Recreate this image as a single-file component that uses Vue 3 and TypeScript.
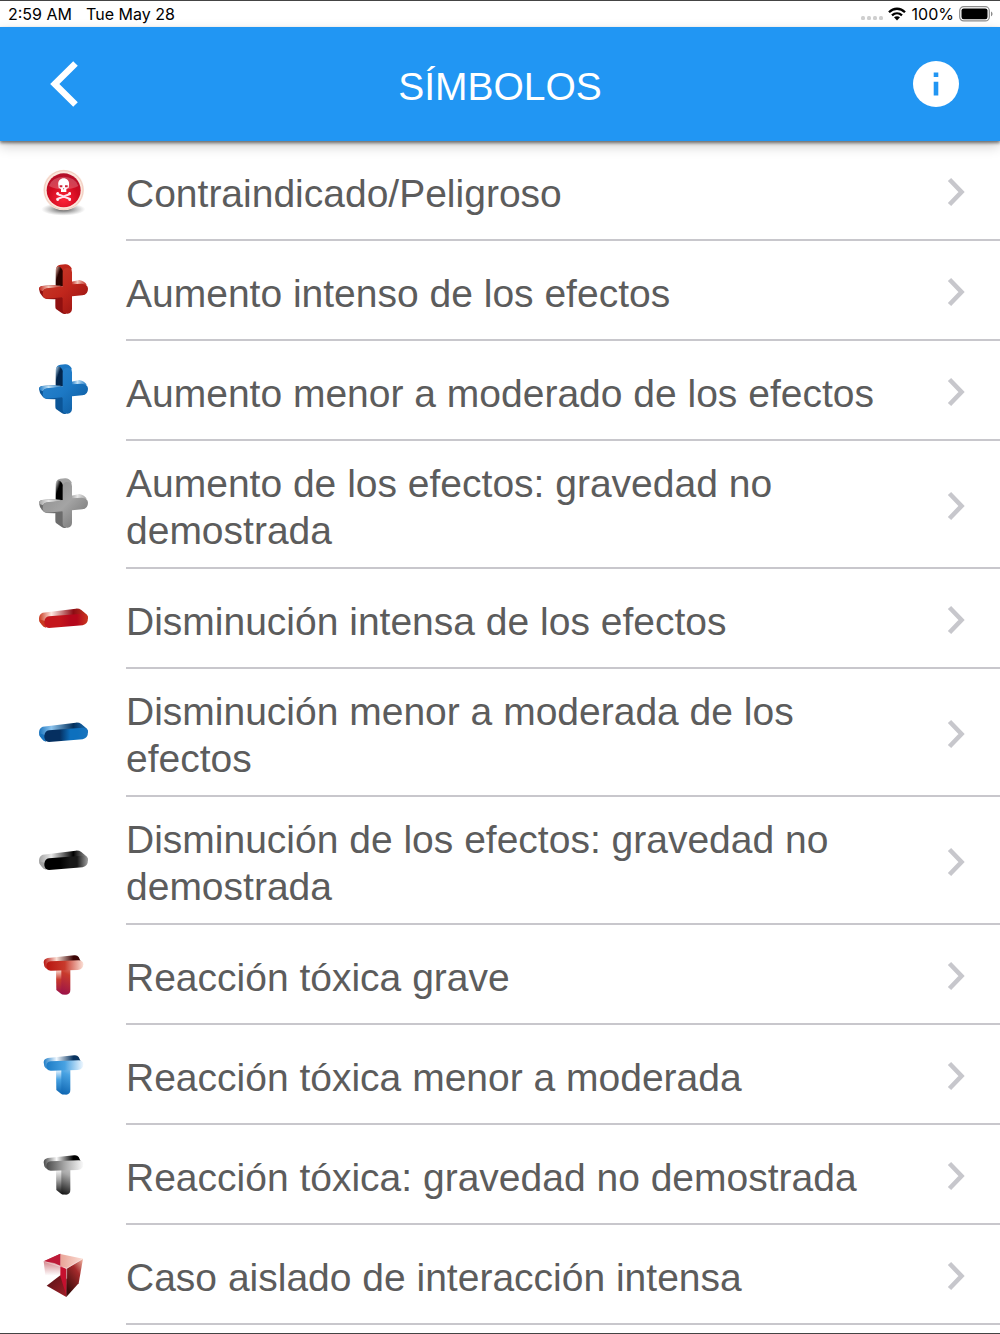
<script setup lang="ts">
type Shape = 'skull' | 'plus' | 'minus' | 'tee' | 'cube'

interface Tone {
  light: string
  main: string
  deep: string
  dark: string
  tip: string
}

interface SymbolRow {
  label: string
  shape: Shape
  tone: Tone
}

const red: Tone = { light: '#f3c5b8', main: '#c0261c', deep: '#8f1010', dark: '#2c0300', tip: '#c8402c' }
const blue: Tone = { light: '#c3e2f6', main: '#1c78c4', deep: '#0b5597', dark: '#03264d', tip: '#2c86d0' }
const grey: Tone = { light: '#e6e6e6', main: '#a4a4a4', deep: '#6c6c6c', dark: '#000000', tip: '#8a8a8a' }
const crimson: Tone = { light: '#ffe9e2', main: '#c4161c', deep: '#b4081c', dark: '#8c0c14', tip: '#c9391f' }
const navy: Tone = { light: '#8cc4ee', main: '#052f60', deep: '#0d70be', dark: '#04305c', tip: '#1a74be' }
const black: Tone = { light: '#e8e8e8', main: '#000000', deep: '#181818', dark: '#000000', tip: '#a2a2a2' }
const teeRed: Tone = { light: '#fbe0d6', main: '#c83a2c', deep: '#98104a', dark: '#3c0505', tip: '#b8150f' }
const teeBlue: Tone = { light: '#f0f8ff', main: '#48a2e2', deep: '#0b62ae', dark: '#08335f', tip: '#1d7cc6' }
const teeGrey: Tone = { light: '#fafafa', main: '#a8a8a8', deep: '#0c0c0c', dark: '#000000', tip: '#4a4a4a' }

const rows: SymbolRow[] = [
  { label: 'Contraindicado/Peligroso', shape: 'skull', tone: red },
  { label: 'Aumento intenso de los efectos', shape: 'plus', tone: red },
  { label: 'Aumento menor a moderado de los efectos', shape: 'plus', tone: blue },
  { label: 'Aumento de los efectos: gravedad no demostrada', shape: 'plus', tone: grey },
  { label: 'Disminución intensa de los efectos', shape: 'minus', tone: crimson },
  { label: 'Disminución menor a moderada de los efectos', shape: 'minus', tone: navy },
  { label: 'Disminución de los efectos: gravedad no demostrada', shape: 'minus', tone: black },
  { label: 'Reacción tóxica grave', shape: 'tee', tone: teeRed },
  { label: 'Reacción tóxica menor a moderada', shape: 'tee', tone: teeBlue },
  { label: 'Reacción tóxica: gravedad no demostrada', shape: 'tee', tone: teeGrey },
  { label: 'Caso aislado de interacción intensa', shape: 'cube', tone: red },
]
</script>

<template>
  <div class="app">
    <div class="status">
      <div class="status-group">
        <span>2:59 AM</span>
        <span>Tue May 28</span>
      </div>
      <div class="status-group right">
        <svg class="dots" viewBox="0 0 22 5" aria-hidden="true">
          <g fill="#cfcfcf">
            <rect x="0" y="0" width="4" height="4" rx="1.5" />
            <rect x="6" y="0" width="4" height="4" rx="1.5" />
            <rect x="12" y="0" width="4" height="4" rx="1.5" />
            <rect x="18" y="0" width="4" height="4" rx="1.5" />
          </g>
        </svg>
        <svg class="wifi" viewBox="0 0 18 14" aria-hidden="true">
          <g fill="none" stroke="#000" stroke-width="2.3">
            <path d="M1 5.2C5.6 .6 12.4 .6 17 5.2" />
            <path d="M4 8.3c2.900-2.700 7.100-2.700 10 0" />
          </g>
          <path d="M9 13.400l-3-3.100c1.700-1.500 4.300-1.500 6 0z" />
        </svg>
        <span>100%</span>
        <svg class="battery" viewBox="0 0 34 16" aria-hidden="true">
          <rect x="0.700" y="0.700" width="29.600" height="14.200" rx="4" fill="none" stroke="#8c8c8c" stroke-width="1.200" />
          <rect x="2.500" y="2.400" width="26" height="10.800" rx="2.200" />
          <path d="M32 5.500c2 .8 2 4 0 4.800z" fill="#8c8c8c" />
        </svg>
      </div>
    </div>

    <header class="bar">
      <button class="bar-button" type="button" aria-label="Volver">
        <svg width="28" height="46" viewBox="0 0 28 46" aria-hidden="true">
          <path d="M25.500 2.500L4.800 23l20.700 20.500" fill="none" stroke="#fff" stroke-width="6.500" />
        </svg>
      </button>
      <h1>SÍMBOLOS</h1>
      <button class="bar-button end" type="button" aria-label="Información">
        <svg width="46" height="46" viewBox="0 0 46 46" aria-hidden="true">
          <circle cx="23" cy="23" r="23" fill="#fff" />
          <path d="M20.700 11.500h4.600v4.600h-4.600zM20.700 20.700h4.600v13.800h-4.600z" fill="#2196f3" />
        </svg>
      </button>
    </header>

    <ul class="list">
      <li v-for="(row, i) in rows" :key="row.label">
        <a href="#" class="row">
          <svg v-if="row.shape === 'skull'" class="icon" viewBox="24 16 150 150" aria-hidden="true">
            <defs>
              <radialGradient id="ball" cx=".5" cy=".75" r=".75">
                <stop offset="0" stop-color="#ff2438" />
                <stop offset=".6" stop-color="#cf0a20" />
                <stop offset="1" stop-color="#b0102a" />
              </radialGradient>
              <radialGradient id="ground">
                <stop offset="0" stop-color="#333" stop-opacity=".9" />
                <stop offset="1" stop-color="#777" stop-opacity="0" />
              </radialGradient>
            </defs>
            <ellipse cx="100" cy="146" rx="66" ry="19" fill="url(#ground)" />
            <circle cx="101" cy="88" r="61" fill="#fbe6dc" />
            <circle cx="101" cy="88" r="58" fill="none" stroke="#f1cdbf" stroke-width="3" />
            <circle cx="101" cy="89" r="51" fill="url(#ball)" />
            <path d="M57 76a45 35 0 0 1 88 0c-24 14-64 14-88 0z" fill="#fff" opacity=".22" />
            <path d="M85 73c-4-27 36-27 32 0l-1 8-7 4v9h-16v-9l-7-4z" fill="#fff" />
            <path d="M89 74h8v6h-8zM105 74h8v6h-8zM99 83l4 0-2 4z" fill="#cf2338" />
            <path d="M82 100l38 15M120 100l-38 15" stroke="#ffe3ef" stroke-width="6" stroke-linecap="round" />
            <g fill="#ffeef5">
              <circle cx="83" cy="98" r="4" /><circle cx="119" cy="98" r="4" />
              <circle cx="83" cy="117" r="4" /><circle cx="119" cy="117" r="4" />
            </g>
          </svg>

          <svg v-else-if="row.shape === 'plus'" class="icon" viewBox="24 31 150 150" aria-hidden="true">
            <defs>
              <linearGradient :id="`front${i}`" x1="0" y1="0" x2="1" y2="1">
                <stop offset="0" :stop-color="row.tone.tip" />
                <stop offset=".5" :stop-color="row.tone.main" />
                <stop offset="1" :stop-color="row.tone.deep" />
              </linearGradient>
              <linearGradient :id="`side${i}`" x1="0" y1="0" x2="1" y2="1">
                <stop offset="0" :stop-color="row.tone.light" />
                <stop offset=".4" :stop-color="row.tone.dark" />
                <stop offset="1" :stop-color="row.tone.dark" />
              </linearGradient>
              <linearGradient :id="`top${i}`" x1="0" y1="0" x2="1" y2="0">
                <stop offset="0" :stop-color="row.tone.main" />
                <stop offset=".4" :stop-color="row.tone.light" />
                <stop offset="1" :stop-color="row.tone.main" />
              </linearGradient>
            </defs>
            <path d="M27 100q0-7 9-9l42-3 22 5-3 35-24 3-23-1q-9-1-13-8-9-10-10-22z" :fill="row.tone.deep" />
            <path d="M27 102q0-9 9-11l42-3 20 6-49 5q-8 1-10 8z" :fill="`url(#top${i})`" />
            <path d="M76 129l22-6 10 51q-6 3-14-3l-16-11q-2-2-2-9z" :fill="row.tone.deep" />
            <path d="M78 40q2-12 13-13l14-1q12-1 20 12l-2 14H98z" :fill="row.tone.main" />
            <path d="M77 42q2-9 8-10 12 4 14 18v42l-22-3z" :fill="`url(#side${i})`" />
            <path d="M124 78l24-5q16 4 22 14l-22 4-24-2z" :fill="`url(#top${i})`" />
            <path d="M98 51q1-14 13-14 14 0 15 13v36l28-2q20 1 20 15 0 18-17 20l-31 3v38q-1 13-13 14-14 1-15-12v-37l-48 4q-11-2-12-12 0-18 13-19l47-5z" :fill="`url(#front${i})`" />
          </svg>

          <svg v-else-if="row.shape === 'minus'" class="icon" viewBox="24 12 150 150" aria-hidden="true">
            <defs>
              <linearGradient :id="`front${i}`" x1="0" y1="0" x2="1" y2="0">
                <stop offset="0" :stop-color="row.tone.main" />
                <stop offset=".35" :stop-color="row.tone.main" />
                <stop offset=".6" :stop-color="row.tone.deep" />
                <stop offset=".75" :stop-color="row.tone.deep" />
                <stop offset="1" :stop-color="row.tone.tip" />
              </linearGradient>
              <linearGradient :id="`top${i}`" x1="0" y1="0" x2="1" y2="0">
                <stop offset="0" :stop-color="row.tone.tip" />
                <stop offset=".25" :stop-color="row.tone.light" />
                <stop offset=".7" :stop-color="row.tone.dark" />
                <stop offset="1" :stop-color="row.tone.tip" />
              </linearGradient>
            </defs>
            <path d="M27 86q0-13 11-18l99-12q10-1 17 4l17 14q3 4 3 12l-20-8-106 34q-7-1-12-8-9-8-9-18z" :fill="`url(#top${i})`" />
            <path d="M27 88l18 5 3 20q-8-1-12-8-9-8-9-17z" :fill="row.tone.tip" />
            <path d="M43 96q1-15 14-17l101-8q16 1 16 13 0 18-16 22l-101 8q-15-1-14-18z" :fill="`url(#front${i})`" />
          </svg>

          <svg v-else-if="row.shape === 'tee'" class="icon" viewBox="24 29 150 150" aria-hidden="true">
            <defs>
              <linearGradient :id="`front${i}`" gradientUnits="userSpaceOnUse" x1="150" y1="50" x2="96" y2="165">
                <stop offset="0" :stop-color="row.tone.light" />
                <stop offset=".5" :stop-color="row.tone.main" />
                <stop offset="1" :stop-color="row.tone.deep" />
              </linearGradient>
              <linearGradient :id="`stem${i}`" x1="0" y1="0" x2="0" y2="1">
                <stop offset="0" :stop-color="row.tone.light" />
                <stop offset=".4" :stop-color="row.tone.main" />
                <stop offset="1" :stop-color="row.tone.deep" />
              </linearGradient>
              <linearGradient :id="`arm${i}`" x1="0" y1="0" x2="1" y2="0">
                <stop offset="0" :stop-color="row.tone.tip" />
                <stop offset=".5" :stop-color="row.tone.main" />
                <stop offset="1" :stop-color="row.tone.light" />
              </linearGradient>
              <linearGradient :id="`top${i}`" x1="0" y1="0" x2="1" y2="0">
                <stop offset="0" :stop-color="row.tone.tip" />
                <stop offset=".35" :stop-color="row.tone.light" />
                <stop offset=".8" :stop-color="row.tone.dark" />
                <stop offset="1" :stop-color="row.tone.dark" />
              </linearGradient>
            </defs>
            <path d="M41 66q0-10 12-13l80-8q9-1 13 5l6 13-87 9-8 18q-12-5-14-12z" :fill="`url(#top${i})`" />
            <path d="M78 89l17-1 9 74q-5 2-11-2l-14-11z" :fill="`url(#stem${i})`" />
            <path d="M94 84h27v65q0 13-13 14-14 0-14-14z" :fill="`url(#front${i})`" />
            <path d="M49 77q0-12 13-14l84-3q14 1 14 12-1 16-17 17l-81 2q-13-1-13-14z" :fill="`url(#arm${i})`" />
          </svg>

          <svg v-else class="icon" viewBox="24 28 150 150" aria-hidden="true">
            <defs>
              <linearGradient id="back" x1="0" y1="0" x2="0" y2="1">
                <stop offset="0" stop-color="#bd4850" />
                <stop offset="1" stop-color="#fff" />
              </linearGradient>
              <linearGradient id="inner" x1="0" y1="0" x2="1" y2="1">
                <stop offset="0" stop-color="#541014" />
                <stop offset="1" stop-color="#a02028" />
              </linearGradient>
              <linearGradient id="right" x1="1" y1="0" x2=".4" y2="1">
                <stop offset="0" stop-color="#f5bba8" />
                <stop offset=".4" stop-color="#a32a2b" />
                <stop offset="1" stop-color="#3d0c0b" />
              </linearGradient>
              <linearGradient id="lid" x1="0" y1="0" x2="1" y2="0">
                <stop offset="0" stop-color="#e9a497" />
                <stop offset="1" stop-color="#fbddd4" />
              </linearGradient>
            </defs>
            <path d="M41 62l50-23v66H46z" fill="url(#back)" />
            <path d="M91 40l68 14-49 30-19-8z" fill="url(#lid)" />
            <path d="M41 62l50-23v36l-18-8z" fill="#bd1a38" />
            <path d="M50 135l41-31 18 12v53z" fill="url(#inner)" />
            <path d="M91 75l19 10v83l-19-62z" fill="#c5102e" />
            <path d="M110 84l49-30-13 74-37 41z" fill="url(#right)" />
            <path d="M42 62l68 21 48-28M110 84v30" fill="none" stroke="#fff" stroke-opacity=".6" stroke-width="2" />
          </svg>

          <span class="content">
            <span class="label">{{ row.label }}</span>
            <svg class="chevron" width="20" height="30" viewBox="0 0 20 30" aria-hidden="true">
              <path d="M2.500 2.500L14.500 15 2.500 27.500" fill="none" stroke="#c7c7cc" stroke-width="4.600" />
            </svg>
          </span>
        </a>
      </li>
    </ul>
  </div>
</template>

<style>
body {
  margin: 0;
  background: #fff;
}
</style>

<style scoped>
.app {
  box-sizing: border-box;
  min-height: 100vh;
  border-top: 1px solid #444;
  border-bottom: 1px solid #444;
  background: #fff;
  font-family: "Liberation Sans", Arial, Helvetica, sans-serif;
  color: #5c5c5c;
}

.status {
  display: flex;
  justify-content: space-between;
  align-items: center;
  height: 26px;
  padding: 0 7px 0 8px;
  font-family: Inter, Roboto, sans-serif;
  font-size: 16px;
  font-weight: 400;
  line-height: 24px;
  color: #000;
}

.status-group {
  display: flex;
  align-items: center;
  gap: 14px;
}

.status-group.right {
  gap: 5px;
}

.dots {
  width: 22px;
  height: 5px;
  margin-top: 8px;
}

.wifi {
  width: 18px;
  height: 14px;
  margin-right: 1px;
}

.battery {
  width: 34px;
  height: 16px;
}

.bar {
  display: flex;
  position: relative;
  justify-content: space-between;
  align-items: center;
  height: 114px;
  padding: 0 41px 0 50px;
  box-sizing: border-box;
  background: #2196f3;
  box-shadow: 0 2px 3px rgba(0, 0, 0, 0.5), 0 5px 12px rgba(0, 0, 0, 0.2);
}

.bar h1 {
  flex: 1;
  margin: 0;
  padding-top: 4px;
  font-size: 39px;
  font-weight: 400;
  line-height: 47px;
  text-align: center;
  color: #fff;
}

.bar-button {
  display: flex;
  justify-content: flex-start;
  width: 37px;
  padding: 0;
  border: 0;
  background: none;
  cursor: pointer;
}

.bar-button.end {
  width: 46px;
}

.list {
  margin: 0;
  padding: 0;
  list-style: none;
}

.row {
  display: flex;
  align-items: stretch;
  color: inherit;
  text-decoration: none;
}

.icon {
  flex: none;
  align-self: center;
  width: 50px;
  height: 50px;
  margin: 0 38px;
  overflow: visible;
}

.content {
  display: flex;
  flex: 1;
  align-items: center;
  justify-content: space-between;
  box-sizing: border-box;
  min-height: 100px;
  padding: 19px 33px 13px 0;
  border-bottom: 2px solid #c8c7cc;
}

.label {
  margin-right: 36px;
  font-size: 39px;
  line-height: 47px;
}

.chevron {
  flex: none;
  margin-bottom: 2px;
}
</style>
